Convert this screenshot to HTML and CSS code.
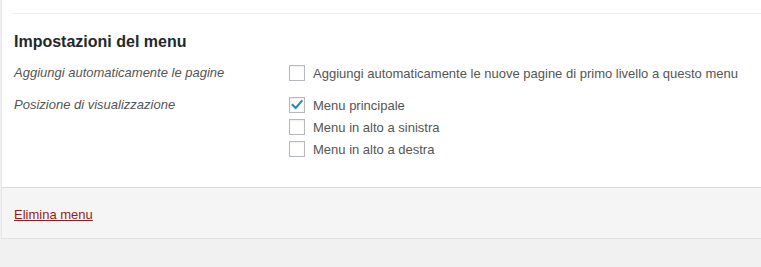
FILE: index.html
```html
<!DOCTYPE html>
<html lang="it">
<head>
<meta charset="utf-8">
<title>Impostazioni del menu</title>
<link rel="stylesheet" href="styles.css">
</head>
<body>
<div class="panel">
  <div class="panel-body">
    <div class="settings">
      <h3 class="settings-title">Impostazioni del menu</h3>
      <div class="settings-grid">
        <div class="setting-label">Aggiungi automaticamente le pagine</div>
        <div class="setting-options">
          <label class="option"><span class="checkbox"></span><span>Aggiungi automaticamente le nuove pagine di primo livello a questo menu</span></label>
        </div>
        <div class="setting-label">Posizione di visualizzazione</div>
        <div class="setting-options">
          <label class="option"><span class="checkbox checked"><svg viewBox="0 0 16 16" width="16" height="16"><path d="M3.6 7.9 L6.7 11 L12.6 4.2" fill="none" stroke="#1e8cbe" stroke-width="2.1" stroke-linecap="square"/></svg></span><span>Menu principale</span></label>
          <label class="option"><span class="checkbox"></span><span>Menu in alto a sinistra</span></label>
          <label class="option"><span class="checkbox"></span><span>Menu in alto a destra</span></label>
        </div>
      </div>
    </div>
  </div>
  <div class="panel-footer">
    <a class="delete-link" href="#">Elimina menu</a>
  </div>
</div>
</body>
</html>
```
FILE: styles.css
```css
html, body {
  margin: 0;
  padding: 0;
}
body {
  background: #f1f1f1;
  font-family: "Liberation Sans", Arial, sans-serif;
  font-size: 13px;
  color: #444;
  overflow: hidden;
}
.panel {
  margin-left: 1px;
  margin-right: -20px;
  border-left: 1px solid #e5e5e5;
  border-bottom: 1px solid #e2e2e2;
  box-shadow: 0 1px 1px rgba(0,0,0,0.04);
  background: #fff;
}
.panel-body {
  padding: 13px 0 0 10px;
  height: 174px;
}
.settings {
  border-top: 1px solid #eee;
}
.settings-title {
  margin: 17px 0 0 2px;
  font-size: 16px;
  line-height: 22px;
  font-weight: 600;
  color: #23282d;
}
.settings-grid {
  display: grid;
  grid-template-columns: 277px 1fr;
  row-gap: 10px;
  margin-top: 9px;
}
.setting-label {
  font-style: italic;
  color: #555;
  line-height: 22px;
  padding-left: 2px;
}
.setting-options {
  display: flex;
  flex-direction: column;
}
.option {
  display: flex;
  align-items: center;
  gap: 8px;
  height: 22px;
  color: #555;
}
.checkbox {
  box-sizing: border-box;
  width: 16px;
  height: 16px;
  border: 1px solid #b4b9be;
  background: #fff;
  box-shadow: inset 0 1px 2px rgba(0,0,0,0.07);
  display: inline-flex;
  flex: none;
  position: relative;
}
.checkbox svg {
  position: absolute;
  left: -1px;
  top: -1px;
}
.panel-footer {
  border-top: 1px solid #ddd;
  background: #f5f5f5;
  height: 50px;
  padding: 0 10px;
  display: flex;
  align-items: center;
}
.delete-link {
  color: #9a1a1a;
  text-decoration: underline;
  padding-left: 2px;
  margin-top: 2px;
}
```
